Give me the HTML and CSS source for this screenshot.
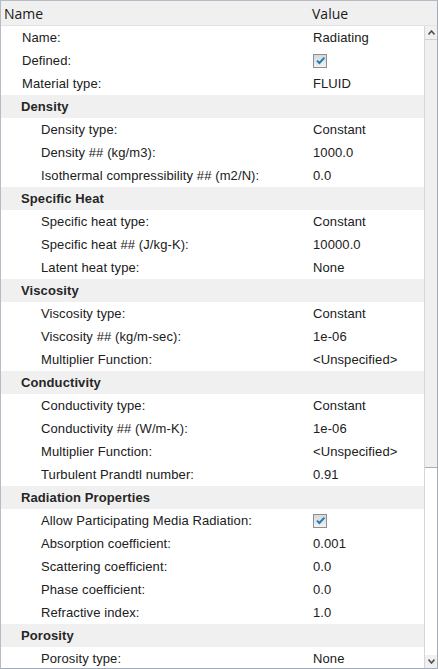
FILE: index.html
```html
<!DOCTYPE html>
<html>
<head>
<meta charset="utf-8">
<link rel="stylesheet" href="styles.css">
</head>
<body>
<div class="panel">
  <div class="header">
    <div class="hcol hname">Name</div>
    <div class="hcol hvalue">Value</div>
  </div>
  <div class="body">
    <div class="rows">
      <div class="row"><div class="label l1">Name:</div><div class="value">Radiating</div></div>
      <div class="row"><div class="label l1">Defined:</div><div class="value"><span class="check"><svg width="11" height="11" viewBox="0 0 11 11"><path d="M2 5.6 L4.4 8 L9.4 2.6" fill="none" stroke="#1f7dbf" stroke-width="2"/></svg></span></div></div>
      <div class="row"><div class="label l1">Material type:</div><div class="value">FLUID</div></div>
      <div class="row section"><div class="label l0">Density</div></div>
      <div class="row"><div class="label l2">Density type:</div><div class="value">Constant</div></div>
      <div class="row"><div class="label l2">Density ## (kg/m3):</div><div class="value">1000.0</div></div>
      <div class="row"><div class="label l2">Isothermal compressibility ## (m2/N):</div><div class="value">0.0</div></div>
      <div class="row section"><div class="label l0">Specific Heat</div></div>
      <div class="row"><div class="label l2">Specific heat type:</div><div class="value">Constant</div></div>
      <div class="row"><div class="label l2">Specific heat ## (J/kg-K):</div><div class="value">10000.0</div></div>
      <div class="row"><div class="label l2">Latent heat type:</div><div class="value">None</div></div>
      <div class="row section"><div class="label l0">Viscosity</div></div>
      <div class="row"><div class="label l2">Viscosity type:</div><div class="value">Constant</div></div>
      <div class="row"><div class="label l2">Viscosity ## (kg/m-sec):</div><div class="value">1e-06</div></div>
      <div class="row"><div class="label l2">Multiplier Function:</div><div class="value">&lt;Unspecified&gt;</div></div>
      <div class="row section"><div class="label l0">Conductivity</div></div>
      <div class="row"><div class="label l2">Conductivity type:</div><div class="value">Constant</div></div>
      <div class="row"><div class="label l2">Conductivity ## (W/m-K):</div><div class="value">1e-06</div></div>
      <div class="row"><div class="label l2">Multiplier Function:</div><div class="value">&lt;Unspecified&gt;</div></div>
      <div class="row"><div class="label l2">Turbulent Prandtl number:</div><div class="value">0.91</div></div>
      <div class="row section"><div class="label l0">Radiation Properties</div></div>
      <div class="row"><div class="label l2">Allow Participating Media Radiation:</div><div class="value"><span class="check"><svg width="11" height="11" viewBox="0 0 11 11"><path d="M2 5.6 L4.4 8 L9.4 2.6" fill="none" stroke="#1f7dbf" stroke-width="2"/></svg></span></div></div>
      <div class="row"><div class="label l2">Absorption coefficient:</div><div class="value">0.001</div></div>
      <div class="row"><div class="label l2">Scattering coefficient:</div><div class="value">0.0</div></div>
      <div class="row"><div class="label l2">Phase coefficient:</div><div class="value">0.0</div></div>
      <div class="row"><div class="label l2">Refractive index:</div><div class="value">1.0</div></div>
      <div class="row section"><div class="label l0">Porosity</div></div>
      <div class="row"><div class="label l2">Porosity type:</div><div class="value">None</div></div>
    </div>
    <div class="scrollbar">
      <div class="sbtn"><svg width="7" height="5" viewBox="0 0 7 5"><path d="M0.5 4.5 L3.5 1 L6.5 4.5" fill="none" stroke="#555" stroke-width="1.6"/></svg></div>
      <div class="thumb"></div>
      <div class="track"></div>
      <div class="sbtn"><svg width="7" height="5" viewBox="0 0 7 5"><path d="M0.5 0.5 L3.5 4 L6.5 0.5" fill="none" stroke="#555" stroke-width="1.6"/></svg></div>
    </div>
  </div>
</div>
</body>
</html>
```
FILE: styles.css
```css
html, body {
  margin: 0;
  padding: 0;
  background: #ffffff;
}
.panel {
  box-sizing: border-box;
  width: 438px;
  height: 669px;
  border: 1px solid #b6bcc5;
  border-right-color: #a4acb8;
  border-bottom-color: #a4acb8;
  display: flex;
  flex-direction: column;
  overflow: hidden;
  font-family: "Liberation Sans", Arial, sans-serif;
  font-size: 13px;
  letter-spacing: 0.1px;
  color: #202020;
}
.header {
  flex: none;
  height: 24px;
  border-bottom: 1px solid #e2e2e2;
  background: #f0f0f0;
  display: flex;
  font-family: "Open Sans", "Liberation Sans", sans-serif;
  font-size: 14px;
  letter-spacing: 0;
  color: #1a1a1a;
}
.hcol {
  line-height: 26px;
}
.hname {
  width: 308px;
  padding-left: 3px;
}
.hvalue {
  flex: 1;
}
.body {
  flex: 1;
  display: flex;
  min-height: 0;
}
.rows {
  flex: 1;
  overflow: hidden;
}
.row {
  height: 23px;
  display: flex;
  align-items: center;
  white-space: nowrap;
}
.row.section {
  background: #f0f0f0;
  font-weight: bold;
  color: #262626;
}
.label {
  box-sizing: border-box;
  width: 312px;
  flex: none;
}
.l0 { padding-left: 20px; }
.l1 { padding-left: 21px; }
.l2 { padding-left: 40px; }
.value {
  flex: 1;
  display: flex;
  align-items: center;
}
.check {
  box-sizing: border-box;
  width: 14px;
  height: 14px;
  border: 1px solid #8f8f8f;
  background: linear-gradient(#d8d8d8, #f2f2f2);
  display: flex;
  align-items: center;
  justify-content: center;
}
.scrollbar {
  flex: none;
  width: 13px;
  box-sizing: border-box;
  border-left: 1px solid #d6d6d6;
  display: flex;
  flex-direction: column;
  background: #ffffff;
}
.sbtn {
  flex: none;
  height: 13px;
  background: #f0f0f0;
  display: flex;
  align-items: center;
  justify-content: center;
}
.thumb {
  flex: none;
  height: 429px;
  box-sizing: border-box;
  background: #f0f0f0;
  border-top: 1px solid #d0d0d0;
  border-bottom: 1px solid #a9aeb5;
}
.track {
  flex: 1;
  background: #ffffff;
}
```
